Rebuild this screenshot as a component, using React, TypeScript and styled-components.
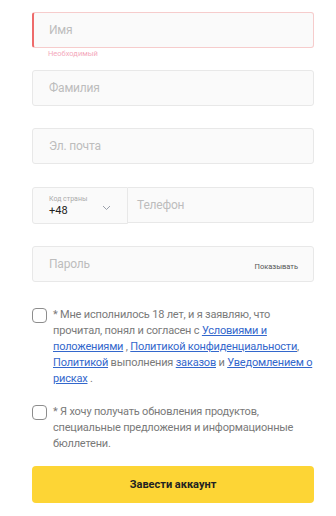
import React from 'react';
import styled, { createGlobalStyle } from 'styled-components';

const GlobalStyle = createGlobalStyle`
  html, body {
    margin: 0;
    padding: 0;
    background: #fff;
  }
  body {
    font-family: Roboto, "Noto Sans", sans-serif;
  }
`;

const App = () => {
  return (
    <>
      <GlobalStyle />
      <StyledForm>
        <FieldBlock>
          <InputBox $error>
            <Placeholder>Имя</Placeholder>
          </InputBox>
          <ErrorText>Необходимый</ErrorText>
        </FieldBlock>

        <FieldBlock>
          <InputBox>
            <Placeholder>Фамилия</Placeholder>
          </InputBox>
        </FieldBlock>

        <FieldBlock>
          <InputBox>
            <Placeholder>Эл. почта</Placeholder>
          </InputBox>
        </FieldBlock>

        <PhoneRow>
          <CountryBox>
            <div className="country__text">
              <span className="country__label">Код страны</span>
              <span className="country__value">+48</span>
            </div>
            <svg width="9" height="6" viewBox="0 0 9 6" fill="none">
              <path d="M1 1l3.5 3.5L8 1" stroke="#9aa0ab" strokeWidth="1" />
            </svg>
          </CountryBox>
          <PhoneBox>
            <Placeholder>Телефон</Placeholder>
          </PhoneBox>
        </PhoneRow>

        <FieldBlock>
          <InputBox>
            <Placeholder>Пароль</Placeholder>
            <ShowButton>Показывать</ShowButton>
          </InputBox>
        </FieldBlock>

        <CheckList>
          <CheckRow>
            <Checkbox />
            <CheckText>
              * Мне исполнилось 18 лет, и я заявляю, что прочитал, понял и согласен с{' '}
              <a href="#">Условиями и положениями</a> , <a href="#">Политикой конфиденциальности</a>,{' '}
              <a href="#">Политикой</a> выполнения <a href="#">заказов</a> и{' '}
              <a href="#">Уведомлением о рисках</a> .
            </CheckText>
          </CheckRow>

          <CheckRow>
            <Checkbox />
            <CheckText>
              * Я хочу получать обновления продуктов, специальные предложения и информационные
              бюллетени.
            </CheckText>
          </CheckRow>
        </CheckList>

        <SubmitButton>Завести аккаунт</SubmitButton>
      </StyledForm>
    </>
  );
};

const StyledForm = styled.div`
  width: 282px;
  padding: 12px 0 0 32px;
  display: flex;
  flex-direction: column;
`;

const FieldBlock = styled.div`
  display: flex;
  flex-direction: column;
  margin-bottom: 22px;
`;

const InputBox = styled.div<{ $error?: boolean }>`
  height: 36px;
  box-sizing: border-box;
  display: flex;
  align-items: center;
  justify-content: space-between;
  padding: 0 16px 0 ${(p) => (p.$error ? '15px' : '16px')};
  background: #fafafa;
  border: 1px solid ${(p) => (p.$error ? '#f6cccc' : '#e8e8e8')};
  border-left: ${(p) => (p.$error ? '2px solid #ee6b6b' : '1px solid #e8e8e8')};
  border-radius: 3px;
`;

const Placeholder = styled.span`
  font-size: 12px;
  letter-spacing: -0.2px;
  color: #bdbdbd;
`;

const ErrorText = styled.span`
  margin-top: 1px;
  margin-bottom: -11px;
  padding-left: 16px;
  font-size: 7.5px;
  line-height: 10px;
  color: #f4a9bb;
`;

const PhoneRow = styled.div`
  display: flex;
  margin-top: 1px;
  margin-bottom: 22px;
`;

const CountryBox = styled.div`
  width: 96px;
  height: 37px;
  box-sizing: border-box;
  display: flex;
  align-items: center;
  justify-content: space-between;
  padding: 0 16px;
  background: #fafafa;
  border: 1px solid #e8e8e8;
  border-radius: 3px 0 0 3px;

  .country__text {
    display: flex;
    flex-direction: column;
    padding-top: 2px;
  }
  .country__label {
    font-size: 7px;
    line-height: 9px;
    color: #aaa;
  }
  .country__value {
    font-size: 11px;
    line-height: 14px;
    color: #222;
  }
  svg {
    margin-top: 4px;
  }
`;

const PhoneBox = styled.div`
  flex: 1;
  height: 36px;
  box-sizing: border-box;
  display: flex;
  align-items: center;
  padding: 0 9px;
  background: #fafafa;
  border: 1px solid #e8e8e8;
  border-left: none;
  border-radius: 0 3px 3px 0;
`;

const ShowButton = styled.span`
  font-size: 7.5px;
  color: #555;
  margin-top: 4px;
  margin-right: -1px;
`;

const CheckList = styled.div`
  display: flex;
  flex-direction: column;
  gap: 17px;
  padding-top: 3px;
  margin-bottom: 14px;
`;

const CheckRow = styled.div`
  display: flex;
  gap: 6px;
`;

const Checkbox = styled.span`
  flex: none;
  width: 15px;
  height: 15px;
  margin-top: 1px;
  box-sizing: border-box;
  border: 1px solid #8d8d8d;
  border-radius: 4px;
  background: #fff;
`;

const CheckText = styled.p`
  margin: 0;
  font-size: 11px;
  letter-spacing: -0.2px;
  line-height: 16px;
  color: #7a7a7a;

  a {
    color: #3367cc;
    text-decoration: underline;
  }
`;

const SubmitButton = styled.button`
  height: 37px;
  width: 100%;
  border: none;
  border-radius: 4px;
  background: #fdd535;
  font-family: Roboto, "Noto Sans", sans-serif;
  font-size: 11px;
  font-weight: 700;
  color: #222;
  cursor: pointer;
`;

export default App;
